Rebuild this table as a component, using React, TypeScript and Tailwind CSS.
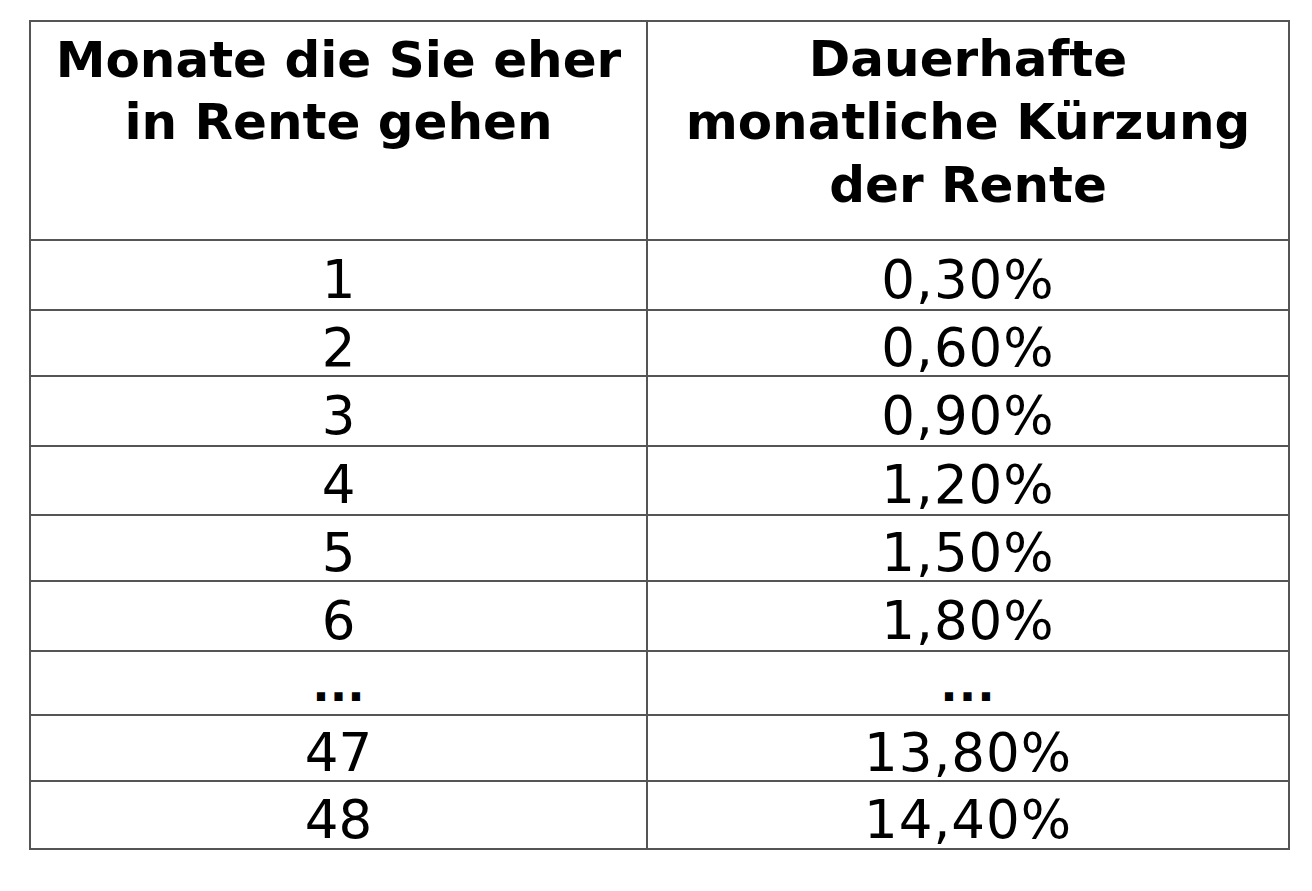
const rows = [
  { months: "1", cut: "0,30%", h: "h-[70px]" },
  { months: "2", cut: "0,60%", h: "h-[66px]" },
  { months: "3", cut: "0,90%", h: "h-[70px]" },
  { months: "4", cut: "1,20%", h: "h-[69px]" },
  { months: "5", cut: "1,50%", h: "h-[66px]" },
  { months: "6", cut: "1,80%", h: "h-[70px]" },
  { months: "...", cut: "...", h: "h-[64px]", bold: true },
  { months: "47", cut: "13,80%", h: "h-[66px]" },
  { months: "48", cut: "14,40%", h: "h-[66px]" },
];

export default function App() {
  return (
    <div className="w-[1312px] h-[891px] bg-white pt-[20px] pl-[29px] font-['DejaVu_Sans',sans-serif] text-black">
      <div className="w-[1261px] border-2 border-[#555] grid grid-cols-[617px_1fr]">
        <div className="h-[219px] border-r-2 border-b-2 border-[#555] text-center font-bold text-[50px] leading-[62px] pt-[7px]">
          Monate die Sie eher
          <br />
          in Rente gehen
        </div>
        <div className="h-[219px] border-b-2 border-[#555] text-center font-bold text-[50px] leading-[63px] pt-[6px]">
          Dauerhafte
          <br />
          monatliche Kürzung
          <br />
          der Rente
        </div>
        {rows.map((r, i) => {
          const last = i === rows.length - 1;
          const text = r.bold
            ? "font-bold text-[46px] pt-[4px]"
            : "text-[53px] pt-[9px]";
          return [
            <div
              key={r.months + "a"}
              className={`${r.h} ${text} flex items-center justify-center border-r-2 border-[#555] ${last ? "" : "border-b-2"}`}
            >
              {r.months}
            </div>,
            <div
              key={r.months + "b"}
              className={`${r.h} ${text} flex items-center justify-center border-[#555] tracking-[1px] ${last ? "" : "border-b-2"}`}
            >
              {r.cut}
            </div>,
          ];
        })}
      </div>
    </div>
  );
}
